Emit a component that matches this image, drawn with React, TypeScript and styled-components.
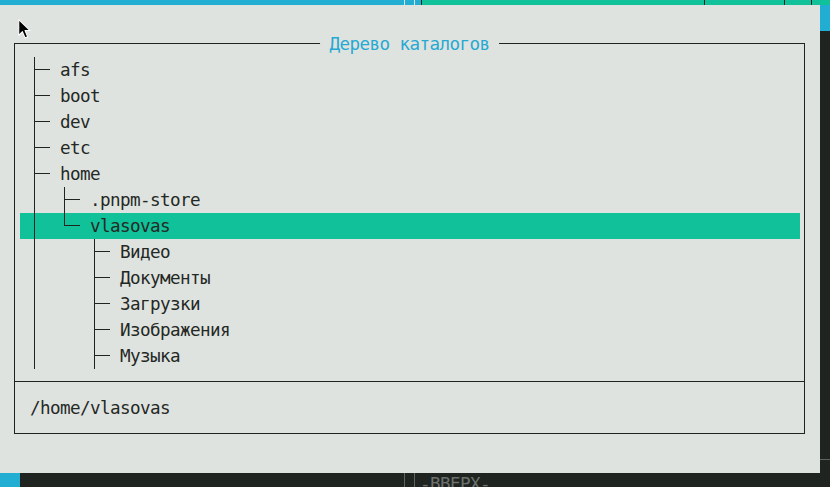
import React from 'react';
import styled, { createGlobalStyle } from 'styled-components';

const BLUE = '#22aed3';
const GREEN = '#10c199';
const DARK = '#1f2421';
const LIGHT = '#dfe3df';
const INK = '#242825';
const RULE = '#5f645f';

type Kind = 'pipe' | 'tee' | 'elbow' | 'blank';

interface Node {
  name: string;
  guides: Kind[];
  selected?: boolean;
}

const nodes: Node[] = [
  { name: 'afs', guides: ['tee'] },
  { name: 'boot', guides: ['tee'] },
  { name: 'dev', guides: ['tee'] },
  { name: 'etc', guides: ['tee'] },
  { name: 'home', guides: ['tee'] },
  { name: '.pnpm-store', guides: ['pipe', 'tee'] },
  { name: 'vlasovas', guides: ['pipe', 'elbow'], selected: true },
  { name: 'Видео', guides: ['pipe', 'blank', 'tee'] },
  { name: 'Документы', guides: ['pipe', 'blank', 'tee'] },
  { name: 'Загрузки', guides: ['pipe', 'blank', 'tee'] },
  { name: 'Изображения', guides: ['pipe', 'blank', 'tee'] },
  { name: 'Музыка', guides: ['pipe', 'blank', 'tee'] },
];

const App = () => {
  return (
    <>
      <GlobalStyle />
      <Screen>
        <TopStrip>
          <Block $w={404} $c={BLUE} />
          <Block $w={1} $c={LIGHT} />
          <Block $w={9} $c={BLUE} />
          <Block $w={1} $c={LIGHT} />
          <Block $w={6} $c={BLUE} />
          <Block $w={1} $c={DARK} />
          <Block $w={282} $c={GREEN} />
          <Block $w={1} $c={DARK} />
          <Block $w={79} $c={GREEN} />
          <Block $w={1} $c={DARK} />
          <Block $w={26} $c={GREEN} />
          <Block $w={1} $c={DARK} />
          <Block $c={GREEN} />
        </TopStrip>

        <Dialog>
          <Frame>
            <Title>Дерево каталогов</Title>
            <TreePane>
              {nodes.map((n) => (
                <Row key={n.name} $selected={n.selected}>
                  {n.guides.map((g, i) => (
                    <Guide key={i} $kind={g} />
                  ))}
                  <Label>{n.name}</Label>
                </Row>
              ))}
            </TreePane>
            <PathPane>/home/vlasovas</PathPane>
          </Frame>
        </Dialog>

        <RightColumn>
          <Cap />
          <Spacer />
          <Rule />
        </RightColumn>

        <BottomStrip>
          <Block $w={20} $c={BLUE} />
          <Block $w={384} $c="transparent" />
          <Divider $w={10} />
          <Divider $w={6} />
          <Hint>-ВВЕРХ-</Hint>
        </BottomStrip>

        <Pointer width="15" height="22" viewBox="0 0 14 21">
          <path
            d="M1.5 1.5 L1.5 16.5 L5 13 L7.6 19 L10 18 L7.5 12 L12.3 12 Z"
            fill="#000"
            stroke="#fff"
            strokeWidth="1"
            strokeLinejoin="round"
          />
        </Pointer>
      </Screen>
    </>
  );
};

export default App;

const GlobalStyle = createGlobalStyle`
  html, body {
    margin: 0;
    padding: 0;
    background: ${DARK};
  }
`;

const Screen = styled.div`
  position: relative;
  display: grid;
  grid-template-columns: 820px 10px;
  grid-template-rows: 5px 468px 14px;
  width: 830px;
  height: 487px;
  overflow: hidden;
  background: ${DARK};
  font-family: 'DejaVu Sans Mono', 'Liberation Mono', monospace;
  font-size: 17.6px;
  letter-spacing: -0.6px;
  color: ${INK};
`;

const TopStrip = styled.div`
  grid-column: 1 / -1;
  display: flex;
`;

const Block = styled.div<{ $w?: number; $c: string }>`
  flex: ${({ $w }) => ($w ? `0 0 ${$w}px` : '1')};
  background: ${({ $c }) => $c};
`;

const Dialog = styled.div`
  grid-column: 1;
  grid-row: 2;
  background: ${LIGHT};
  padding: 38px 15px 39px 14px;
`;

const Frame = styled.div`
  position: relative;
  box-sizing: border-box;
  height: 100%;
  display: flex;
  flex-direction: column;
  border: 1px solid ${DARK};
`;

const Title = styled.div`
  position: absolute;
  top: -13px;
  left: 50%;
  transform: translateX(-50%);
  padding: 0 10px;
  background: ${LIGHT};
  color: #28a9d3;
  line-height: 26px;
  white-space: nowrap;
`;

const TreePane = styled.div`
  padding: 13px 4px 12px 5px;
  display: flex;
  flex-direction: column;
`;

const Row = styled.div<{ $selected?: boolean }>`
  display: flex;
  height: 26px;
  line-height: 26px;
  background: ${({ $selected }) => ($selected ? GREEN : 'transparent')};
`;

const Guide = styled.span<{ $kind: Kind }>`
  position: relative;
  flex: 0 0 30px;

  &::before {
    content: '';
    display: ${({ $kind }) => ($kind === 'blank' ? 'none' : 'block')};
    position: absolute;
    left: 14px;
    top: 0;
    width: 1px;
    height: ${({ $kind }) => ($kind === 'elbow' ? '13px' : '26px')};
    background: ${DARK};
  }

  &::after {
    content: '';
    display: ${({ $kind }) => ($kind === 'tee' || $kind === 'elbow' ? 'block' : 'none')};
    position: absolute;
    left: 14px;
    top: 12px;
    width: 16px;
    height: 1px;
    background: ${DARK};
  }
`;

const Label = styled.span`
  margin-left: 10px;
  white-space: pre;
`;

const PathPane = styled.div`
  border-top: 1px solid ${DARK};
  padding: 13px 0 12px 15px;
  line-height: 26px;
`;

const RightColumn = styled.div`
  grid-column: 2;
  grid-row: 2;
  display: flex;
  flex-direction: column;
  padding-bottom: 13px;
`;

const Cap = styled.div`
  height: 26px;
  background: ${BLUE};
`;

const Spacer = styled.div`
  flex: 1;
`;

const Rule = styled.div`
  height: 1px;
  background: ${RULE};
`;

const BottomStrip = styled.div`
  grid-column: 1 / -1;
  display: flex;
  overflow: hidden;
  line-height: 22px;
`;

const Divider = styled.div<{ $w: number }>`
  flex: 0 0 ${({ $w }) => $w}px;
  box-sizing: border-box;
  border-left: 1px solid ${RULE};
`;

const Hint = styled.span`
  color: #6c716c;
  white-space: pre;
`;

const Pointer = styled.svg`
  position: absolute;
  left: 17px;
  top: 18px;
`;
